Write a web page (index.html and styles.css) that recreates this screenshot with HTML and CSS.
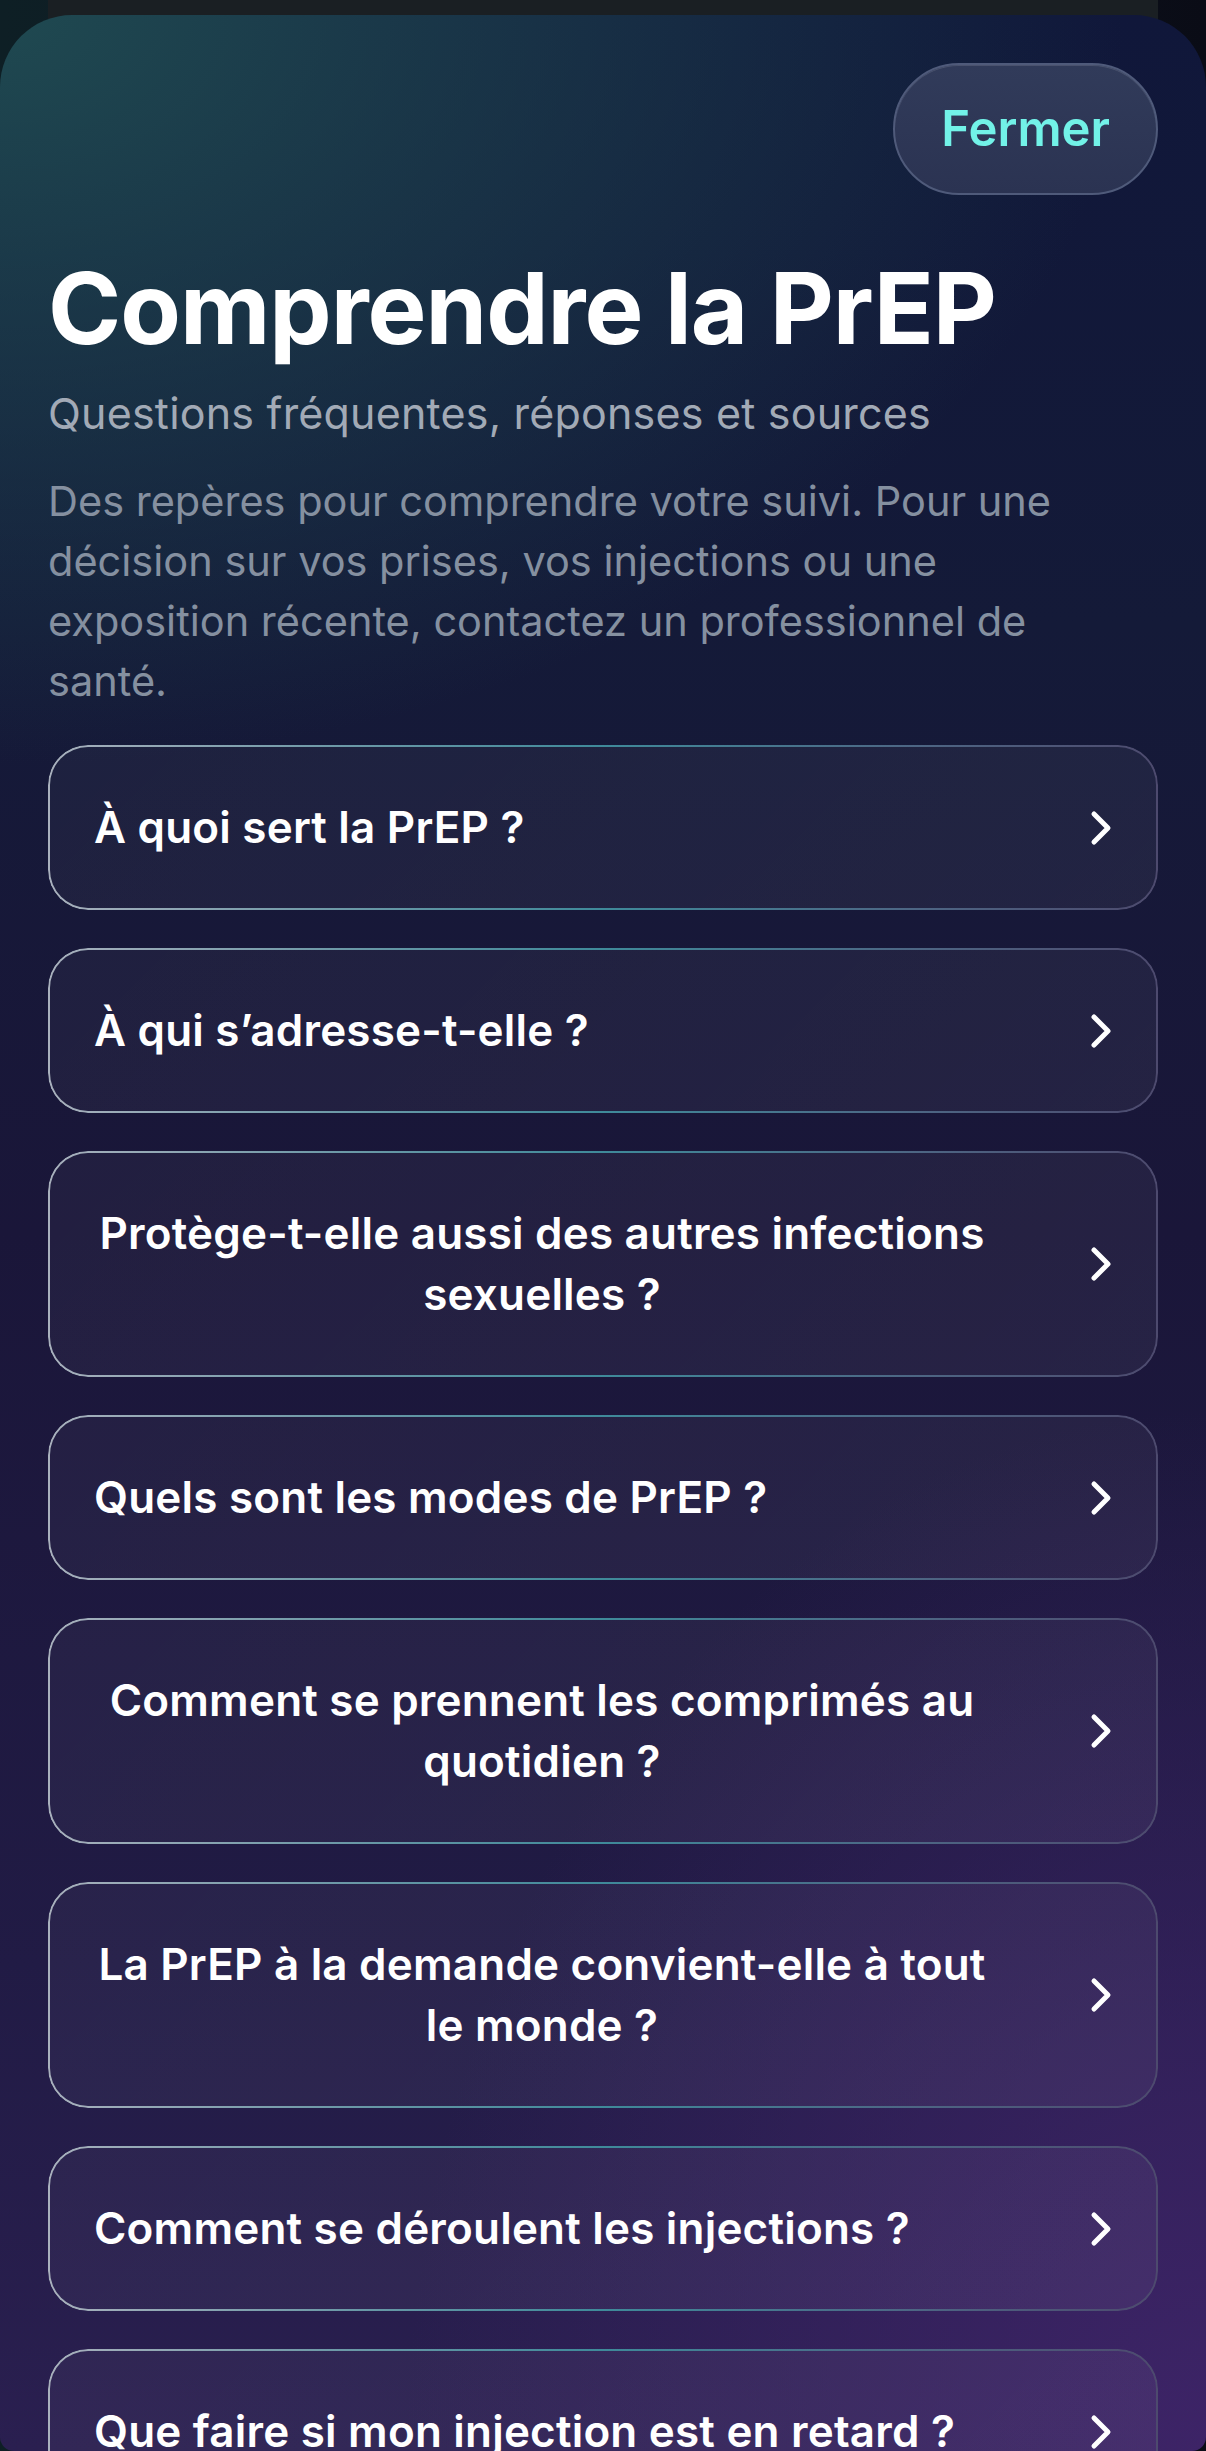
FILE: index.html
```html
<!DOCTYPE html>
<html lang="fr">
<head>
    <meta charset="UTF-8">
    <meta name="viewport" content="width=device-width, initial-scale=1.0">
    <title>Comprendre la PrEP</title>
    <link rel="stylesheet" href="styles.css">
</head>
<body>
    <div class="behind-card"></div>
    <main class="sheet">
        <div class="sheet-top">
            <button class="close-btn" type="button">Fermer</button>
        </div>
        <h1 class="sheet-title">Comprendre la PrEP</h1>
        <p class="sheet-subtitle">Questions fréquentes, réponses et sources</p>
        <p class="sheet-intro">Des repères pour comprendre votre suivi. Pour une décision sur vos prises, vos injections ou une exposition récente, contactez un professionnel de santé.</p>

        <ul class="faq-list">
            <li>
                <button class="faq-item" type="button">
                    <span class="faq-question">À quoi sert la PrEP ?</span>
                    <svg class="chevron" viewBox="0 0 22 36" aria-hidden="true"><polyline points="4,4 18,18 4,32"/></svg>
                </button>
            </li>
            <li>
                <button class="faq-item" type="button">
                    <span class="faq-question">À qui s’adresse-t-elle ?</span>
                    <svg class="chevron" viewBox="0 0 22 36" aria-hidden="true"><polyline points="4,4 18,18 4,32"/></svg>
                </button>
            </li>
            <li>
                <button class="faq-item" type="button">
                    <span class="faq-question">Protège-t-elle aussi des autres infections sexuelles ?</span>
                    <svg class="chevron" viewBox="0 0 22 36" aria-hidden="true"><polyline points="4,4 18,18 4,32"/></svg>
                </button>
            </li>
            <li>
                <button class="faq-item" type="button">
                    <span class="faq-question">Quels sont les modes de PrEP ?</span>
                    <svg class="chevron" viewBox="0 0 22 36" aria-hidden="true"><polyline points="4,4 18,18 4,32"/></svg>
                </button>
            </li>
            <li>
                <button class="faq-item" type="button">
                    <span class="faq-question">Comment se prennent les comprimés au quotidien ?</span>
                    <svg class="chevron" viewBox="0 0 22 36" aria-hidden="true"><polyline points="4,4 18,18 4,32"/></svg>
                </button>
            </li>
            <li>
                <button class="faq-item" type="button">
                    <span class="faq-question">La PrEP à la demande convient-elle à tout le monde ?</span>
                    <svg class="chevron" viewBox="0 0 22 36" aria-hidden="true"><polyline points="4,4 18,18 4,32"/></svg>
                </button>
            </li>
            <li>
                <button class="faq-item" type="button">
                    <span class="faq-question">Comment se déroulent les injections ?</span>
                    <svg class="chevron" viewBox="0 0 22 36" aria-hidden="true"><polyline points="4,4 18,18 4,32"/></svg>
                </button>
            </li>
            <li>
                <button class="faq-item" type="button">
                    <span class="faq-question">Que faire si mon injection est en retard ?</span>
                    <svg class="chevron" viewBox="0 0 22 36" aria-hidden="true"><polyline points="4,4 18,18 4,32"/></svg>
                </button>
            </li>
        </ul>
    </main>
</body>
</html>
```

FILE: styles.css
```css
html, body { margin: 0; padding: 0; }
body {
    height: 2451px; overflow: hidden;
    background: linear-gradient(90deg, #0e1f25 0%, #0f1822 50%, #0a0c16 100%);
    font-family: Inter, "Noto Sans", sans-serif; color: #fff;
}

/* the screen under the sheet peeks out at the top */
.behind-card { height: 90px; margin: 0 48px -75px; background: #1a1f23; }

.sheet {
    position: relative; box-sizing: border-box; height: 2436px; overflow: hidden;
    padding: 48px 48px 0; border-radius: 72px 72px 14px 14px;
    background:
        radial-gradient(ellipse 1500px 1000px at 0 0, rgba(32, 76, 82, 0.95), rgba(32, 76, 82, 0) 75%),
        radial-gradient(ellipse 1000px 1300px at 100% 100%, rgba(62, 36, 104, 0.95), rgba(62, 36, 104, 0) 80%),
        linear-gradient(180deg, #10173a 0%, #141a38 25%, #1a1639 50%, #211b45 80%, #2a1f50 100%);
}

.sheet-top { display: flex; justify-content: flex-end; }
.close-btn {
    font-family: inherit; font-size: 49px; font-weight: 600; line-height: 58px; color: #72f2e8;
    padding: 35px 46px; border-radius: 999px; border: 2px solid #4f5a7a;
    background: linear-gradient(180deg, #313b5a 0%, #2b3352 100%);
    box-shadow: inset 0 1px 0 rgba(255, 255, 255, 0.12); cursor: pointer;
}

.sheet-title { margin: 58px 0 0; font-size: 99px; line-height: 110px; font-weight: 700; letter-spacing: -1px; }
.sheet-subtitle { margin: 24px 0 0; font-size: 43px; line-height: 52px; letter-spacing: 0.2px; color: #a2aab6; }
.sheet-intro { max-width: 1080px; margin: 32px 0 0; font-size: 41.5px; line-height: 60px; color: #8590a0; }

.faq-list { list-style: none; margin: 34px 0 0; padding: 0; display: flex; flex-direction: column; gap: 38px; }
.faq-item {
    position: relative; width: 100%; display: flex; align-items: center; justify-content: space-between;
    padding: 52px 46px; border: none; border-radius: 40px; cursor: pointer;
    font-family: inherit; color: #fff; text-align: center;
    background: linear-gradient(135deg, rgba(255, 255, 255, 0.035), rgba(255, 255, 255, 0.05));
}
/* gradient outline: light on the left, teal through the middle, violet on the right */
.faq-item::before {
    content: ""; position: absolute; inset: 0; padding: 2px; border-radius: inherit; pointer-events: none;
    background: linear-gradient(90deg, #a9b1bd 0%, #6f9aa8 25%, #3f8a9a 50%, #4d6684 78%, #4d4a6e 100%);
    -webkit-mask: linear-gradient(#000 0 0) content-box, linear-gradient(#000 0 0);
    -webkit-mask-composite: xor; mask-composite: exclude;
}
.faq-question { max-width: 896px; font-size: 44px; line-height: 61px; font-weight: 600; letter-spacing: 0.2px; }
.chevron { flex: none; width: 22px; height: 36px; }
.chevron polyline { fill: none; stroke: #fff; stroke-width: 5; stroke-linecap: round; stroke-linejoin: round; }
```
